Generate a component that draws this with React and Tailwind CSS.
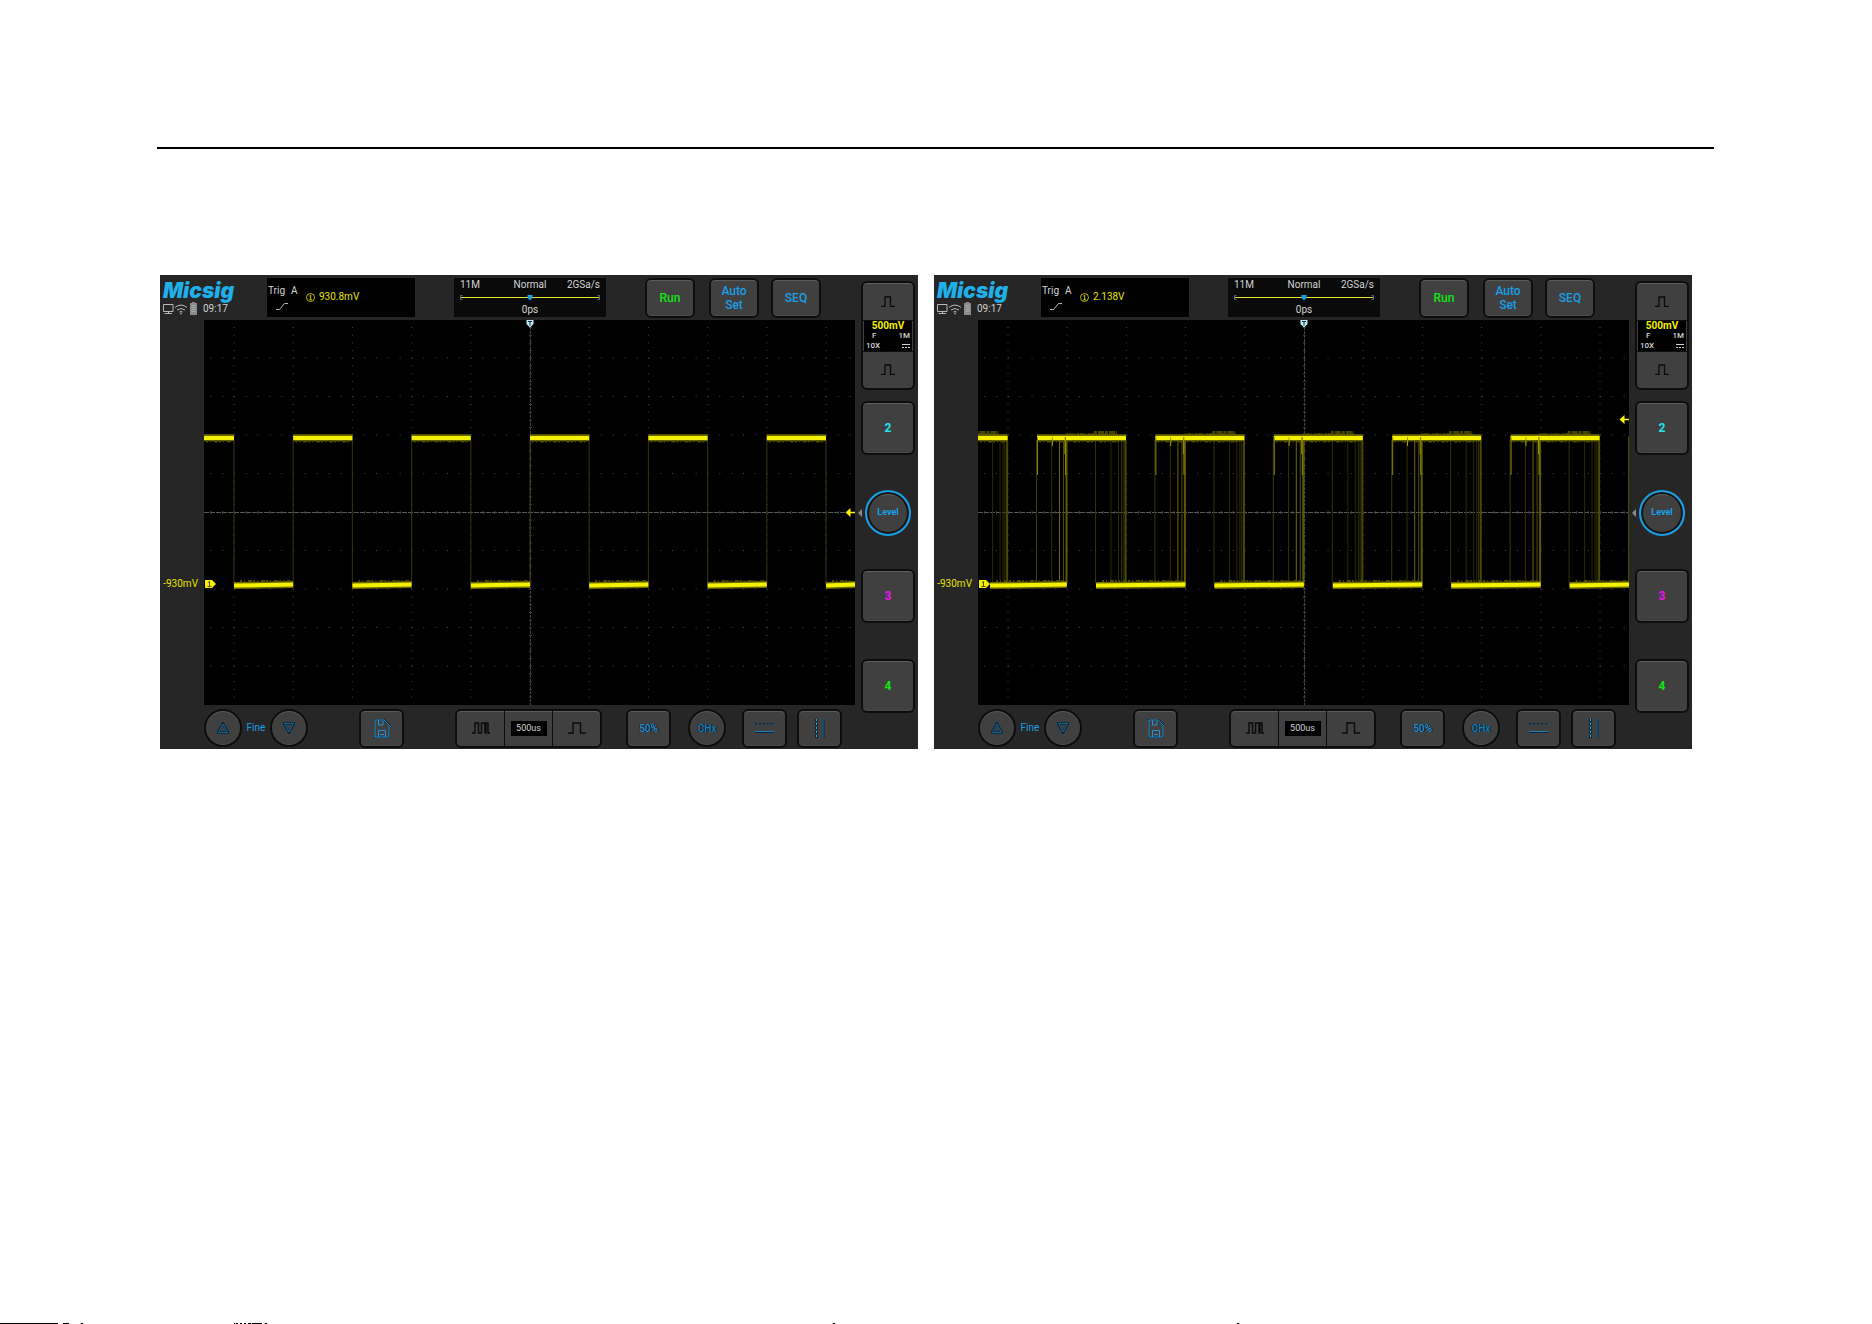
import React from "react";

const DIV_X = 59.2;
const DIV_Y = 38.5;
const MID_X = 326;
const MID_Y = 192;
const COLUMNS = [-5, -4, -3, -2, -1, 0, 1, 2, 3, 4, 5].map((n) => MID_X + n * DIV_X);
const ROWS = [-4, -3, -2, -1, 1, 2, 3, 4].map((n) => MID_Y + n * DIV_Y);

const FACE =
  "flex items-center justify-center border-2 border-[#0d0d0d] bg-[#404040] shadow-[inset_0_1px_0_#5c5c5c,inset_0_-1px_0_#4a4a4a]";

function Graticule() {
  return (
    <g fill="none">
      {COLUMNS.map((x) => (
        <line key={x} x1={x} x2={x} y1="7" y2="380" stroke="#4a4a4a" strokeWidth="1" strokeDasharray="1 6.7" />
      ))}
      {ROWS.map((y) => (
        <line key={y} x1="6.2" x2="651" y1={y} y2={y} stroke="#4a4a4a" strokeWidth="1" strokeDasharray="1 10.84" />
      ))}
      <line x1={MID_X + 0.5} x2={MID_X + 0.5} y1="7" y2="385" stroke="#484848" strokeWidth="1" strokeDasharray="3 1" />
      <line x1={MID_X + 0.5} x2={MID_X + 0.5} y1="7" y2="380" stroke="#383838" strokeWidth="3" strokeDasharray="1 6.7" />
      <line x1="0" x2="651" y1={MID_Y + 0.5} y2={MID_Y + 0.5} stroke="#585858" strokeWidth="1" strokeDasharray="5 1" />
      <line x1="6.2" x2="651" y1={MID_Y + 0.5} y2={MID_Y + 0.5} stroke="#444444" strokeWidth="3" strokeDasharray="1 10.84" />
    </g>
  );
}

function HighLevel({ from, to, noisy }) {
  return (
    <g fill="none">
      {noisy && (
        <>
          <line x1={Math.max(from, to - 60)} x2={to - 8} y1="114" y2="114" stroke="#3a3a00" strokeWidth="2" strokeDasharray="2 1 4 1 1 2" />
          <line x1={to - 32} x2={to - 9} y1="112.5" y2="112.5" stroke="#454500" strokeWidth="3" strokeDasharray="3 1 6 1" />
        </>
      )}
      <line x1={from} x2={to} y1="117.7" y2="117.7" stroke="#6a6a00" strokeWidth="7" />
      <line x1={from + 2} x2={to - 2} y1="121.5" y2="121.5" stroke="#4a4a00" strokeWidth="2" strokeDasharray="2 2 1 3 4 1" />
      <line x1={from} x2={to} y1="118" y2="118" stroke="#f4f000" strokeWidth="4" />
    </g>
  );
}

function LowLevel({ from, to }) {
  return (
    <g fill="none">
      <line x1={from} x2={to} y1="265.5" y2="264.5" stroke="#6a6a00" strokeWidth="7" />
      <line x1={from + 6} x2={to - 2} y1="261" y2="261" stroke="#4a4a00" strokeWidth="2" strokeDasharray="2 2 1 3 4 1" />
      <line x1={from} x2={to} y1="265.5" y2="264.5" stroke="#f4f000" strokeWidth="4" />
    </g>
  );
}

function Edge({ x, color = "#3c3c00", width = 1, top = 120, bottom = 263 }) {
  return <line x1={x} x2={x} y1={top} y2={bottom} stroke={color} strokeWidth={width} />;
}

function StableWave() {
  const periods = [0, 1, 2, 3, 4].map((n) => 89.2 + n * 2 * DIV_X);
  return (
    <g>
      {COLUMNS.map((x) => (
        <Edge key={x} x={x} color="#34340c" />
      ))}
      <HighLevel from={0} to={30} />
      <LowLevel from={30} to={89.2} />
      {periods.map((x) => (
        <React.Fragment key={x}>
          <HighLevel from={x} to={x + DIV_X} />
          <LowLevel from={x + DIV_X} to={Math.min(x + 2 * DIV_X, 651)} />
        </React.Fragment>
      ))}
    </g>
  );
}

function DriftingWave() {
  const falls = [0, 1, 2, 3, 4, 5].map((n) => 29.6 + n * 2 * DIV_X);
  const rises = [0, 1, 2, 3, 4].map((n) => 59 + n * 2 * DIV_X);
  return (
    <g>
      {falls.map((x) => (
        <React.Fragment key={x}>
          {x > 30 && <Edge x={x - 30.5} color="#333300" />}
          <Edge x={x - 15} color="#2a2a00" />
          <Edge x={x - 7.5} color="#2a2a00" />
          <Edge x={x - 4.5} color="#2e2e00" />
          <Edge x={x - 2.7} color="#2e2e00" />
          <Edge x={x - 0.5} color="#4c4a00" width={2} />
          <HighLevel from={Math.max(x - 89, 0)} to={x} noisy />
        </React.Fragment>
      ))}
      {rises.map((x) => (
        <React.Fragment key={x}>
          <Edge x={x - 0.5} color="#3c3c00" />
          <Edge x={x + 0.5} color="#8a8600" top={117} bottom={155} />
          <Edge x={x + 14.8} color="#333300" />
          <Edge x={x + 15.3} color="#a09c00" top={117} bottom={126} />
          <Edge x={x + 22.5} color="#6a6800" />
          <Edge x={x + 26.5} color="#4c4a00" />
          <Edge x={x + 28} color="#b0ac00" top={117} bottom={134} />
          <Edge x={x + 29.5} color="#5c5a00" width={2} />
          <Edge x={x + 28.5} color="#8a8600" top={117} bottom={155} />
        </React.Fragment>
      ))}
      <Edge x={650.5} color="#4c4a00" top={116} />
      <LowLevel from={12} to={88.8} />
      {[118, 236.4, 354.8, 473.2, 591.6].map((x) => (
        <LowLevel key={x} from={x} to={Math.min(x + 89.5, 651)} />
      ))}
    </g>
  );
}

function Screen({ drifting, triggerY, label }) {
  return (
    <div className="min-w-0 flex-1 bg-black">
      <svg className="block h-[385px] w-full" viewBox="0 0 651 385" preserveAspectRatio="none" role="img" aria-label={label}>
        <Graticule />
        {drifting ? <DriftingWave /> : <StableWave />}
        <path d="M322.500 0h7v4l-3.500 3.500-3.500-3.500z" fill="#c4ecf8" />
        <path d="M324 1.500h4M326 1.500v4" stroke="#123" strokeWidth="1" />
        <path d="M1 260h7l4 4-4 4H1z" fill="#f4f000" />
        <path d="M4 262.500l1.500-1V266.500M3.500 266.500h4" stroke="#55550a" strokeWidth="1" fill="none" />
        <path d={`M641.5 ${triggerY}l5-4.500v3.800h4.500v1.400h-4.500v3.800z`} fill="#fbf700" />
      </svg>
    </div>
  );
}

function StatusIcons() {
  return (
    <svg className="h-[13px] w-9 shrink-0" viewBox="0 0 36 13" fill="none" stroke="#b8b8b8" aria-hidden="true">
      <path d="M.5 2.500h9.500v7H.5zM1.500 11.500h7.500M5.500 9.500v2" />
      <path d="M12 5.500q6-5 12 0M14 8q4-3 8 0M16.500 10q1.500-1 3 0" />
      <path d="M17.300 10.800h1.400v1.400h-1.400z" fill="#b8b8b8" stroke="none" />
      <path d="M29 0h3v1h2v12h-7V1h2z" fill="#8a8a8a" stroke="none" />
      <path d="M28.500 3.500h4M28.500 5.500h4M28.500 7.500h4M28.500 9.500h4" stroke="#a8a8a8" />
    </svg>
  );
}

function Header({ level }) {
  return (
    <header className="flex h-[45px] items-center">
      <div className="flex w-[107px] flex-col pl-[3px]">
        <span className="font-[Inter,sans-serif] text-[21px] leading-[22px] font-black text-[#1fb0ea] italic">Micsig</span>
        <span className="flex items-center gap-1 text-[10px] leading-[14px] text-[#cfcfcf]">
          <StatusIcons />
          09:17
        </span>
      </div>
      <div className="flex h-[39px] w-[148px] items-center bg-black text-[10px] text-[#d4d4d4]">
        <div className="flex w-[39px] flex-col gap-1 pl-px leading-[14px]">
          <span className="flex gap-[6px]">
            <span>Trig</span>
            <span>A</span>
          </span>
          <svg className="ml-2 h-[9px] w-3" viewBox="0 0 12 9" fill="none" stroke="#b8b8b8" aria-hidden="true">
            <path d="M0 7.500h3.500L8.500 1.500H12" />
          </svg>
        </div>
        <span className="flex items-center gap-1 pb-px leading-3 text-[#e6e200]">
          <svg className="size-[9px]" viewBox="0 0 9 9" fill="none" stroke="#e6e200" aria-hidden="true">
            <circle cx="4.500" cy="4.500" r="4" strokeWidth=".8" />
            <path d="M3.500 3l1.200-.8v4.600M3.300 6.800h2.600" strokeWidth=".9" />
          </svg>
          {level}
        </span>
      </div>
      <div className="ml-[39px] flex h-[39px] w-[152px] flex-col bg-[#0a0a0a] px-[6px] text-[10px] leading-[13px] text-[#d4d4d4]">
        <div className="grid grid-cols-3">
          <span>11M</span>
          <span className="text-center">Normal</span>
          <span className="text-right">2GSa/s</span>
        </div>
        <svg className="h-[12px] w-full" viewBox="0 0 140 12" fill="none" aria-hidden="true">
          <path d="M2.500 4.500h-2v4h2M137.500 4.500h2v4h-2" stroke="#5a6a6a" />
          <path d="M1 6.500h138" stroke="#e8e430" />
          <path d="M67.500 4h5v3l-2.500 2.500-2.500-2.500z" fill="#1d9be0" />
        </svg>
        <span className="text-center">0ps</span>
      </div>
      <div className="ml-[39px] flex text-[12px] leading-[14px] font-medium">
        <button className={`${FACE} h-10 w-[50px] rounded-md text-[#12e612]`}>Run</button>
        <button className={`${FACE} ml-[14px] h-10 w-[50px] rounded-md text-[#1a9fe6]`}>
          Auto
          <br />
          Set
        </button>
        <button className={`${FACE} ml-3 h-10 w-[50px] rounded-md text-[#1a9fe6]`}>SEQ</button>
      </div>
    </header>
  );
}

function Toolbar() {
  return (
    <footer className="flex h-11 items-center pt-[2px] pl-[44px] text-[#1a9fe6]">
      <button aria-label="Up" className={`${FACE} size-[38px] rounded-full`}>
        <svg className="size-3" viewBox="0 0 12 12" fill="none">
          <path d="M6 1.500L11 10.500H1z" stroke="#08263a" strokeWidth="2.500" />
          <path d="M6 2L10.500 10.500H1.500z" stroke="#1c7fb8" strokeWidth=".7" />
        </svg>
      </button>
      <span className="w-7 text-center text-[10px] leading-3">Fine</span>
      <button aria-label="Down" className={`${FACE} size-[38px] rounded-full`}>
        <svg className="size-3" viewBox="0 0 12 12" fill="none">
          <path d="M6 10.500L1 1.500h10z" stroke="#08263a" strokeWidth="2.500" />
          <path d="M6 10L1.500 1.500h9z" stroke="#1c7fb8" strokeWidth=".7" />
        </svg>
      </button>
      <button aria-label="Save" className={`${FACE} ml-[51px] h-[39px] w-[45px] rounded-md`}>
        <svg className="h-[19px] w-4" viewBox="0 0 16 19" fill="none">
          <path d="M.500 1h9.500l5.500 5v12H.500z" stroke="#08263a" strokeWidth="2" />
          <path d="M1 1h9l5 5v12H1z" stroke="#2c92cc" />
          <path d="M4.500 1v5h4.500V2M4.500 18v-6.500h7V18M6 15.500h4" stroke="#2c92cc" />
        </svg>
      </button>
      <div className="ml-[51px] flex h-[39px] w-[147px] overflow-hidden rounded-md border-2 border-[#0d0d0d] bg-[#404040] shadow-[inset_0_1px_0_#5c5c5c]">
        <button aria-label="Zoom out time base" className="flex flex-1 items-center justify-center border-r border-[#0d0d0d]">
          <svg className="h-3 w-[18px]" viewBox="0 0 18 12" fill="none" stroke="#0a0a0a" strokeWidth="1.400">
            <path d="M0 11h3V1h3.500v10h3V1h3.500v10h1V1h2v10h2" />
          </svg>
        </button>
        <span className="flex w-12 items-center justify-center border-r border-[#0d0d0d]">
          <span className="w-9 bg-black text-center text-[9px] leading-[15px] text-[#d4d4d4]">500us</span>
        </span>
        <button aria-label="Zoom in time base" className="flex flex-1 items-center justify-center">
          <svg className="h-3 w-[18px]" viewBox="0 0 18 12" fill="none" stroke="#0a0a0a" strokeWidth="1.400">
            <path d="M0 11h5V1h7.500v10H18" />
          </svg>
        </button>
      </div>
      <button className={`${FACE} ml-[24px] h-[39px] w-[45px] rounded-md text-[10px] font-medium text-[#2c92cc] [text-shadow:1px_0_#08263a,-1px_0_#08263a]`}>
        50%
      </button>
      <button className={`${FACE} ml-[17px] size-[38px] rounded-full text-[10px] font-medium text-[#1c7fb8] [text-shadow:1px_0_#08263a,-1px_0_#08263a]`}>
        CHx
      </button>
      <button aria-label="Horizontal cursors" className={`${FACE} ml-4 h-[39px] w-[45px] rounded-md`}>
        <svg className="h-[10px] w-[19px]" viewBox="0 0 19 10" fill="none">
          <path d="M0 1h19" stroke="#08263a" strokeWidth="1.500" strokeDasharray="3 1" />
          <path d="M1 1.500h18" stroke="#1c6a98" strokeWidth=".6" strokeDasharray="2 2" />
          <path d="M0 9h19" stroke="#08263a" strokeWidth="2" />
          <path d="M0 8.500h19" stroke="#1c7fb8" />
        </svg>
      </button>
      <button aria-label="Vertical cursors" className={`${FACE} ml-[10px] h-[39px] w-[45px] rounded-md`}>
        <svg className="h-[19px] w-[10px]" viewBox="0 0 10 19" fill="none">
          <path d="M1.500 0v19" stroke="#08263a" strokeWidth="3" strokeDasharray="3 1" />
          <path d="M1.500 0v19" stroke="#4aa8d8" strokeDasharray="2 2" />
          <path d="M8.500 0v19" stroke="#08263a" strokeWidth="2" />
          <path d="M8 0v19" stroke="#1c6a98" />
        </svg>
      </button>
    </footer>
  );
}

function Pulse() {
  return (
    <svg className="h-[11px] w-[14px]" viewBox="0 0 14 11" fill="none" stroke="#0a0a0a" strokeWidth="1.300" aria-hidden="true">
      <path d="M0 10.300h4V1h5.500v9.300H14" />
    </svg>
  );
}

function ChannelColumn() {
  return (
    <aside className="flex w-[63px] flex-col items-center pt-[6px] pr-[3px] pl-[6px] text-[12px] font-bold">
      <div className="flex h-[109px] w-[54px] flex-col overflow-hidden rounded-md border-2 border-[#0d0d0d] bg-[#404040] shadow-[inset_0_1px_0_#5c5c5c]">
        <button aria-label="Increase vertical scale" className="flex flex-1 items-center justify-center border-b border-[#0d0d0d]">
          <Pulse />
        </button>
        <div className="mx-px h-[30px] bg-black px-[2px] text-[8px] leading-[10px] font-medium text-[#d4d4d4]">
          <div className="text-center text-[10px] font-bold text-[#f4f000]">500mV</div>
          <div className="flex justify-between pl-[6px]">
            <span>F</span>
            <span>1M</span>
          </div>
          <div className="flex items-center justify-between">
            <span>10X</span>
            <svg className="h-1 w-2" viewBox="0 0 8 4" stroke="#d4d4d4" aria-hidden="true">
              <path d="M0 .5h8" />
              <path d="M0 3.500h8" strokeDasharray="2 1" />
            </svg>
          </div>
        </div>
        <button aria-label="Decrease vertical scale" className="flex flex-1 items-center justify-center border-t border-[#0d0d0d]">
          <Pulse />
        </button>
      </div>
      <button className={`${FACE} mt-[11px] h-[54px] w-[54px] rounded-md text-[#1ce6ee]`}>2</button>
      <div className="relative mt-[35px]">
        <svg className="absolute top-[19px] -left-[7px] h-2 w-1" viewBox="0 0 4 8" aria-hidden="true">
          <path d="M4 0v8L0 4z" fill="#8a8a8a" />
        </svg>
        <button className="flex size-[46px] items-center justify-center rounded-full border-2 border-[#1a9fe6] bg-[#404040] text-[9px] text-[#1a9fe6] shadow-[inset_0_0_0_2px_#141414,inset_0_3px_0_#5c5c5c]">
          Level
        </button>
      </div>
      <button className={`${FACE} mt-[33px] h-[54px] w-[54px] rounded-md text-[#ee10ee]`}>3</button>
      <button className={`${FACE} mt-[36px] h-[54px] w-[54px] rounded-md text-[#12e612]`}>4</button>
    </aside>
  );
}

function Scope({ level, drifting, triggerY, label }) {
  return (
    <section className="flex bg-[#262626]" aria-label={label}>
      <div className="flex min-w-0 flex-1 flex-col">
        <Header level={level} />
        <div className="flex">
          <div className="w-[44px] pt-[258px] pr-[6px] text-right text-[10px] leading-3 text-[#e6e200]">-930mV</div>
          <Screen drifting={drifting} triggerY={triggerY} label={label} />
        </div>
        <Toolbar />
      </div>
      <ChannelColumn />
    </section>
  );
}

export default function App() {
  return (
    <main className="flex min-h-screen flex-col bg-white font-[Roboto,sans-serif]">
      <hr className="mt-[147px] mr-[158px] ml-[157px] border-t-2 border-black" />
      <div className="mt-[126px] mr-[180px] ml-[160px] grid grid-cols-2 gap-4">
        <Scope level="930.8mV" triggerY={192.5} label="Stable square wave" />
        <Scope level="2.138V" triggerY={99.5} drifting label="Drifting square wave" />
      </div>
      <svg className="mt-auto h-px w-[1240px]" viewBox="0 0 1240 1" stroke="#000" aria-hidden="true">
        <path d="M0 .5h58M63 .5h6M81 .5h2M234 .5h1M236 .5h2M240 .5h2M244 .5h2M248 .5h3M252 .5h10M265 .5h2M833 .5h2M1237 .5h2" />
      </svg>
    </main>
  );
}
